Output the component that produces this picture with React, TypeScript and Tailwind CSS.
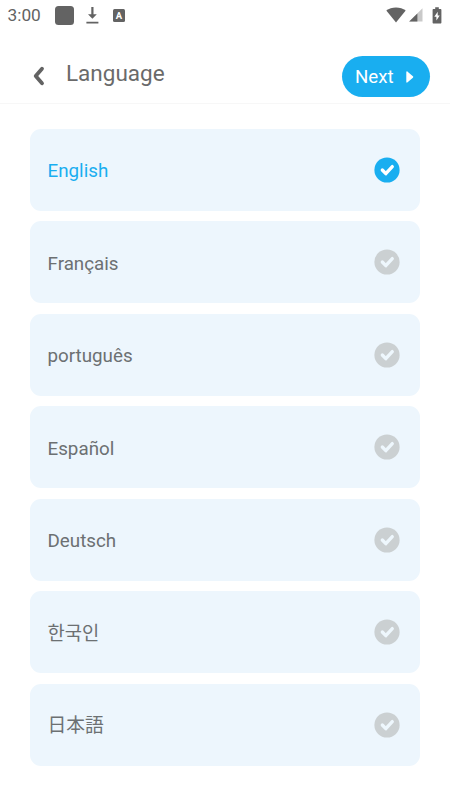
import React, { useState } from 'react';

interface Language {
  code: string;
  label: string;
}

const LANGUAGES: Language[] = [
  { code: 'en', label: 'English' },
  { code: 'fr', label: 'Français' },
  { code: 'pt', label: 'português' },
  { code: 'es', label: 'Español' },
  { code: 'de', label: 'Deutsch' },
  { code: 'ko', label: '한국인' },
  { code: 'ja', label: '日本語' },
];

const StatusBar: React.FC = () => (
  <div className="flex h-[30px] items-center justify-between pl-[7.5px] pr-[8.5px] text-[#636363]">
    <div className="flex items-center">
      <span className="w-[47px] text-[17.3px] leading-[30px]">3:00</span>
      <span className="h-[19px] w-[19px] rounded-[3.5px] bg-[#636363]" />
      <svg className="ml-[12px]" width="13" height="17" viewBox="0 0 13 17" fill="currentColor">
        <path d="M5.3 0h2.2v7.2h3.3L6.4 11.8 2 7.2h3.3zM.4 14.8h12v1.7H.4z" />
      </svg>
      <span className="ml-[14.5px] flex h-[13px] w-[12px] items-center justify-center rounded-[1.5px] bg-[#636363] text-[9.5px] font-bold leading-[13px] text-white">
        A
      </span>
    </div>
    <div className="flex items-center">
      <svg width="20" height="16" viewBox="0 0 20 16" fill="currentColor">
        <path d="M10 15.6.3 3.6C3 1.5 6.2.4 10 .4s7 1.1 9.7 3.2z" />
      </svg>
      <svg className="ml-[3px]" width="14" height="14" viewBox="0 0 14 14" fill="currentColor">
        <path d="M.2 13.6 13.5.3v13.3z" opacity=".35" />
        <path d="M.2 13.6 8.4 5.4v8.2z" />
      </svg>
      <svg className="ml-[9px]" width="10" height="17" viewBox="0 0 10 17">
        <path d="M3.2.3h3.6v1.6h1.6c.6 0 1 .4 1 1v12.6c0 .6-.4 1-1 1H1.6c-.6 0-1-.4-1-1V2.9c0-.6.4-1 1-1h1.6z" fill="currentColor" />
        <path d="M5.7 4.7 2.3 9.8h2.1v3.8l3.3-5.2h-2z" fill="#fff" />
      </svg>
    </div>
  </div>
);

const CheckMark: React.FC<{ active: boolean }> = ({ active }) => (
  <svg width="26" height="26" viewBox="0 0 26 26" fill="none">
    <circle cx="13" cy="13" r="12.6" fill={active ? '#19aef0' : '#cbd0d2'} />
    <path
      d="M8.3 13 11.8 16.7 18.3 9.6"
      stroke={active ? '#fff' : '#eef7fd'}
      strokeWidth="3.3"
      strokeLinecap="round"
      strokeLinejoin="round"
    />
  </svg>
);

const App: React.FC = () => {
  const [selected, setSelected] = useState('en');

  return (
    <div className="flex h-[800px] w-[450px] flex-col overflow-hidden bg-white font-[Roboto,'Noto_Sans_CJK_KR',sans-serif] text-[#6c7072]">
      <StatusBar />

      <header className="flex h-[74px] items-start justify-between border-b border-[#f7f7f7] pl-[32px] pr-[20px] pt-[26px]">
        <div className="flex items-center pt-[2px]">
          <button className="mt-[1px]">
            <svg width="14" height="20" viewBox="0 0 14 20" fill="none">
              <path d="M10 2.8 3.7 10l6.3 7.2" stroke="#636363" strokeWidth="3.8" strokeLinecap="round" strokeLinejoin="round" />
            </svg>
          </button>
          <h1 className="-mt-[5px] ml-[20px] text-[22.5px] leading-[40px] text-[#6a6a6a]">Language</h1>
        </div>
        <button className="flex h-[41px] w-[88px] items-center rounded-full bg-[#19aef0] pl-[13px] text-[18.7px] text-white">
          <span className="w-[51px] pt-[2px] text-left">Next</span>
          <svg width="8" height="12" viewBox="0 0 8 12" fill="currentColor">
            <path d="M.3 1.2C.3.3 1 .1 1.6.7l5.3 4.6c.5.4.5 1 0 1.4l-5.3 4.600C1 11.9.3 11.7.3 10.8z" />
          </svg>
        </button>
      </header>

      <main className="flex flex-col gap-[10.2px] px-[30px] pt-[24.6px]">
        {LANGUAGES.map((lang) => (
          <button
            key={lang.code}
            onClick={() => setSelected(lang.code)}
            className={`flex h-[82.3px] shrink-0 items-center justify-between rounded-[11px] bg-[#edf6fd] pl-[17.5px] pr-[19.8px] text-[18.8px] ${
              selected === lang.code ? 'text-[#19aef0]' : 'text-[#6c7072]'
            }`}
          >
            <span className="pt-[3px]">{lang.label}</span>
            <CheckMark active={selected === lang.code} />
          </button>
        ))}
      </main>
    </div>
  );
};

export default App;
